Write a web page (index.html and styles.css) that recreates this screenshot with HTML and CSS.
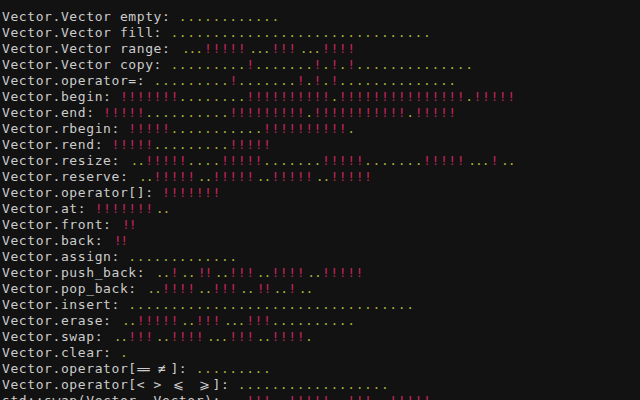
FILE: index.html
```html
<!DOCTYPE html>
<html>
<head>
<meta charset="utf-8">
<link rel="stylesheet" href="styles.css">
</head>
<body>
<div class="term">
<div class="ln">Vector.Vector empty: <span class="g">............</span></div>
<div class="ln">Vector.Vector fill: <span class="g">...............................</span></div>
<div class="ln">Vector.Vector range: <span class="g l3">...</span><span class="r">!!!!!</span><span class="g l3">...</span><span class="r">!!!</span><span class="g l3">...</span><span class="r">!!!!</span></div>
<div class="ln">Vector.Vector copy: <span class="g">.........</span><span class="r">!</span><span class="g">.......</span><span class="r">!</span><span class="g">.</span><span class="r">!</span><span class="g">.</span><span class="r">!</span><span class="g">..............</span></div>
<div class="ln">Vector.operator=: <span class="g">.........</span><span class="r">!</span><span class="g">.......</span><span class="r">!</span><span class="g">.</span><span class="r">!</span><span class="g">.</span><span class="r">!</span><span class="g">..............</span></div>
<div class="ln">Vector.begin: <span class="r">!!!!!!!</span><span class="g">........</span><span class="r">!!!!!!!!!!</span><span class="g">.</span><span class="r">!!!!!!!!!!!!!!!</span><span class="g">.</span><span class="r">!!!!!</span></div>
<div class="ln">Vector.end: <span class="r">!!!!!</span><span class="g">..........</span><span class="r">!!!!!!!!!</span><span class="g">.</span><span class="r">!!!!!!!!!!!</span><span class="g">.</span><span class="r">!!!!!</span></div>
<div class="ln">Vector.rbegin: <span class="r">!!!!!</span><span class="g">...........</span><span class="r">!!!!!!!!!!</span><span class="g">.</span></div>
<div class="ln">Vector.rend: <span class="r">!!!!!</span><span class="g">.........</span><span class="r">!!!!!</span></div>
<div class="ln">Vector.resize: <span class="g l2">..</span><span class="r">!!!!!</span><span class="g">....</span><span class="r">!!!!!</span><span class="g">.......</span><span class="r">!!!!!</span><span class="g">.......</span><span class="r">!!!!!</span><span class="g l3">...</span><span class="r">!</span><span class="g l2">..</span></div>
<div class="ln">Vector.reserve: <span class="g l2">..</span><span class="r">!!!!!</span><span class="g l2">..</span><span class="r">!!!!!</span><span class="g l2">..</span><span class="r">!!!!!</span><span class="g l2">..</span><span class="r">!!!!!</span></div>
<div class="ln">Vector.operator[]: <span class="r">!!!!!!!</span></div>
<div class="ln">Vector.at: <span class="r">!!!!!!!</span><span class="g l2">..</span></div>
<div class="ln">Vector.front: <span class="r l2">!!</span></div>
<div class="ln">Vector.back: <span class="r l2">!!</span></div>
<div class="ln">Vector.assign: <span class="g">.............</span></div>
<div class="ln">Vector.push_back: <span class="g l2">..</span><span class="r">!</span><span class="g l2">..</span><span class="r l2">!!</span><span class="g l2">..</span><span class="r">!!!</span><span class="g l2">..</span><span class="r">!!!!</span><span class="g l2">..</span><span class="r">!!!!!</span></div>
<div class="ln">Vector.pop_back: <span class="g l2">..</span><span class="r">!!!!</span><span class="g l2">..</span><span class="r">!!!</span><span class="g l2">..</span><span class="r l2">!!</span><span class="g l2">..</span><span class="r">!</span><span class="g l2">..</span></div>
<div class="ln">Vector.insert: <span class="g">..................................</span></div>
<div class="ln">Vector.erase: <span class="g l2">..</span><span class="r">!!!!!</span><span class="g l2">..</span><span class="r">!!!</span><span class="g l3">...</span><span class="r">!!!</span><span class="g">..........</span></div>
<div class="ln">Vector.swap: <span class="g l2">..</span><span class="r">!!!</span><span class="g l2">..</span><span class="r">!!!!</span><span class="g l3">...</span><span class="r">!!!</span><span class="g l2">..</span><span class="r">!!!!</span><span class="g">.</span></div>
<div class="ln">Vector.clear: <span class="g">.</span></div>
<div class="ln">Vector.operator[<span class="lg eq">==</span><span class="lg">≠</span>]: <span class="g">.........</span></div>
<div class="ln">Vector.operator[&lt; &gt; <span class="lg">⩽</span> <span class="lg">⩾</span>]: <span class="g">..................</span></div>
<div class="ln">std::swap(Vector, Vector): <span class="g l2">..</span><span class="r">!!!</span><span class="g l2">..</span><span class="r">!!!!!</span><span class="g l2">..</span><span class="r">!!!</span><span class="g l2">..</span><span class="r">!!!!!</span></div>
</div>
</body>
</html>
```
FILE: styles.css
```css
html, body {
  margin: 0;
  padding: 0;
  background: #121212;
  height: 100%;
  overflow: hidden;
}

.term {
  --cw: 8.42px;
  padding: 9px 0 0 2px;
  font-family: "DejaVu Sans Mono", "Liberation Mono", monospace;
  font-size: 13px;
  letter-spacing: 0.594px;
  line-height: 16px;
  color: #cccccc;
}

.ln {
  height: 16px;
  white-space: pre;
}

.g {
  color: #a9b33b;
}

.r {
  color: #c8245c;
}

.l2,
.l3 {
  display: inline-block;
  text-align: center;
  letter-spacing: -1.1px;
  text-indent: 1px;
}

.l2 {
  width: calc(var(--cw) * 2);
}

.l3 {
  width: calc(var(--cw) * 3);
}

.lg {
  display: inline-block;
  width: calc(var(--cw) * 2);
  text-align: center;
  letter-spacing: 0;
}

.eq {
  text-align: left;
  letter-spacing: -2px;
}
```
